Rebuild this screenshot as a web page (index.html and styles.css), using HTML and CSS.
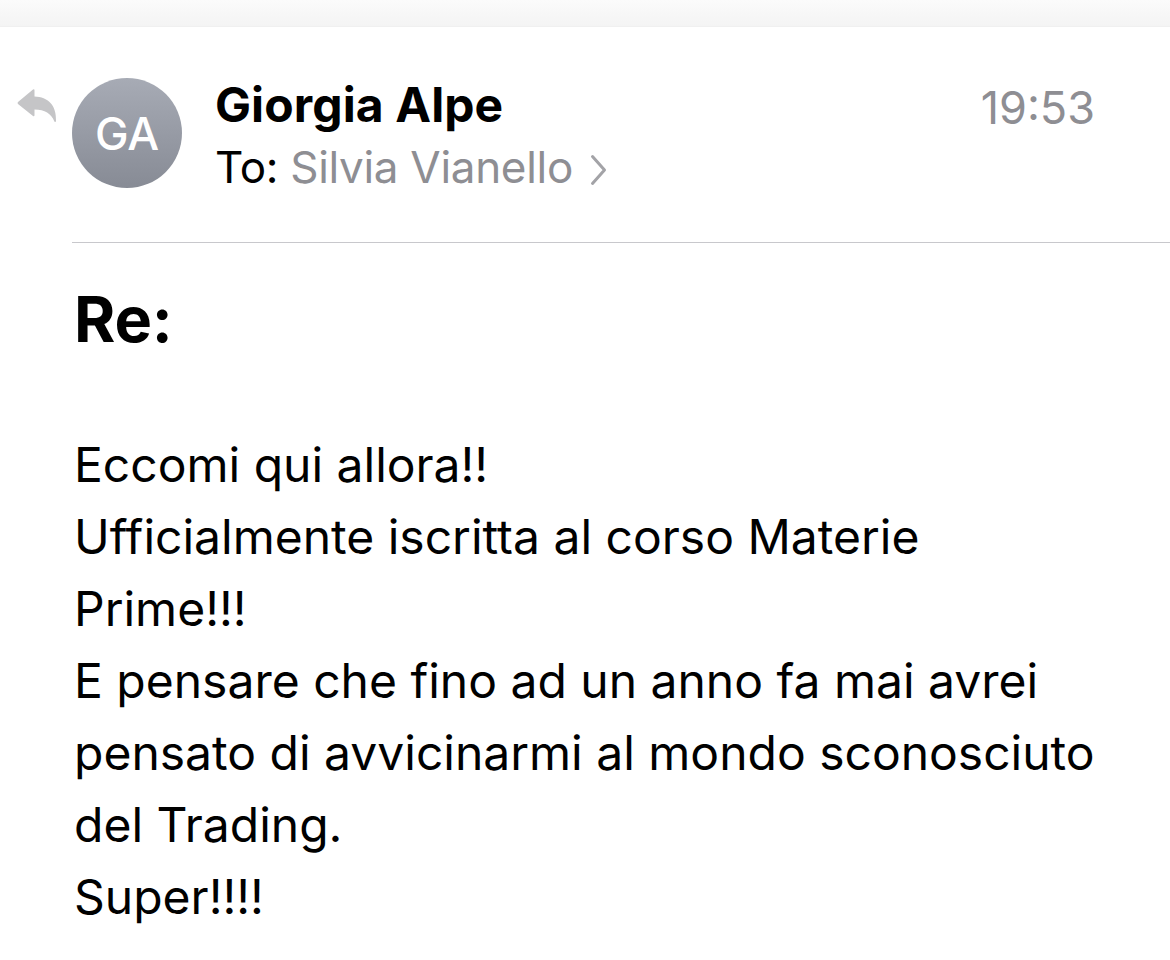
FILE: index.html
```html
<!DOCTYPE html>
<html lang="it">
<head>
<meta charset="utf-8">
<title>Re:</title>
<link rel="stylesheet" href="styles.css">
</head>
<body>
<div class="topbar"></div>
<header class="header">
  <div class="reply-col">
    <svg class="reply-icon" viewBox="0 0 40 36" width="40" height="36" aria-hidden="true">
      <path d="M1 14 L16 1.5 Q17.5 0.5 17.5 2.5 L17.5 8.5 C31 9 39.5 17 39 33 Q38.6 35 37.4 33.4 C34 25.5 28 21.5 17.5 21.5 L17.5 27 Q17.5 29 16 28 L1 16 Q0 15 1 14 Z" fill="#c5c5c7"/>
    </svg>
  </div>
  <div class="avatar">GA</div>
  <div class="info">
    <div class="name">Giorgia Alpe</div>
    <div class="to"><span class="to-label">To:</span> <span class="to-name">Silvia Vianello</span><svg class="chevron" viewBox="0 0 17 32" width="17" height="32" aria-hidden="true"><path d="M2.5 2.5 L14.5 16 L2.5 29.5" fill="none" stroke="#a3a3a7" stroke-width="3" stroke-linecap="round" stroke-linejoin="round"/></svg></div>
  </div>
  <div class="time">19:53</div>
</header>
<div class="divider"></div>
<main class="message">
  <h1 class="subject">Re:</h1>
  <p class="body-text">Eccomi qui allora!!<br>Ufficialmente iscritta al corso Materie<br>Prime!!!<br>E pensare che fino ad un anno fa mai avrei<br>pensato di avvicinarmi al mondo sconosciuto<br>del Trading.<br>Super!!!!</p>
</main>
</body>
</html>
```
FILE: styles.css
```css
html, body {
  margin: 0;
  padding: 0;
  background: #ffffff;
}
body {
  font-family: "Inter", "Roboto", "Liberation Sans", sans-serif;
  color: #000000;
  width: 1170px;
  height: 960px;
  overflow: hidden;
}
.topbar {
  height: 26px;
  background: linear-gradient(to bottom, #fbfbfb, #f4f4f4);
  border-bottom: 1px solid #f0f0f0;
}
.header {
  display: flex;
  align-items: flex-start;
  padding-top: 51px;
  height: 164px;
  box-sizing: border-box;
}
.reply-col {
  width: 72px;
  padding-left: 17px;
  padding-top: 10px;
  box-sizing: border-box;
}
.reply-icon {
  display: block;
}
.avatar {
  width: 110px;
  height: 110px;
  border-radius: 50%;
  background: linear-gradient(to bottom, #a7abb5, #878b95);
  color: #ffffff;
  font-size: 45px;
  font-weight: 500;
  display: flex;
  align-items: center;
  justify-content: center;
  letter-spacing: -0.3px;
  flex-shrink: 0;
}
.info {
  flex: 1;
  margin-left: 33px;
  padding-top: 0;
}
.name {
  font-size: 48px;
  font-weight: 700;
  line-height: 54px;
  letter-spacing: 0.1px;
}
.to {
  font-size: 44px;
  line-height: 64px;
  letter-spacing: -0.3px;
  white-space: nowrap;
  padding-top: 3px;
}
.to-name {
  color: #8e8e93;
}
.chevron {
  margin-left: 17px;
  vertical-align: -3px;
}
.time {
  font-size: 45px;
  color: #8e8e93;
  line-height: 54px;
  padding-top: 3px;
  margin-right: 75px;
}
.divider {
  height: 1px;
  background: #c8c8cc;
  margin-left: 72px;
  margin-top: 51px;
}
.message {
  padding-left: 74px;
}
.subject {
  margin: 0;
  font-size: 63px;
  font-weight: 700;
  line-height: 72px;
  padding-top: 40px;
  letter-spacing: -0.2px;
}
.body-text {
  margin: 74px 0 0 0;
  font-size: 48px;
  line-height: 72px;
}
```
